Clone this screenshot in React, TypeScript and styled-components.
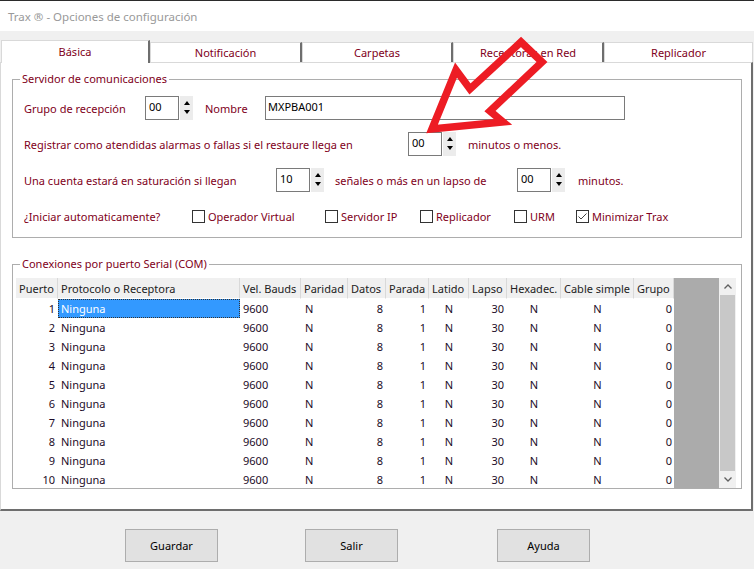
import styled, { createGlobalStyle } from 'styled-components'

const GlobalStyle = createGlobalStyle`
  html, body {
    margin: 0;
    padding: 0;
    background: #f0f0f0;
  }
  body {
    font-family: "Noto Sans", "Open Sans", sans-serif;
    font-size: 11px;
  }
  * {
    box-sizing: border-box;
  }
`

const MAROON = '#800020'

type Align = 'left' | 'right' | 'center'

const columns: { title: string; width: number; align: Align; pad: number }[] = [
  { title: 'Puerto', width: 42, align: 'right', pad: 3 },
  { title: 'Protocolo o Receptora', width: 182, align: 'left', pad: 3 },
  { title: 'Vel. Bauds', width: 61, align: 'left', pad: 3 },
  { title: 'Paridad', width: 47, align: 'left', pad: 4 },
  { title: 'Datos', width: 38, align: 'right', pad: 3 },
  { title: 'Parada', width: 43, align: 'right', pad: 3 },
  { title: 'Latido', width: 40, align: 'center', pad: 0 },
  { title: 'Lapso', width: 38, align: 'right', pad: 3 },
  { title: 'Hexadec.', width: 54, align: 'center', pad: 0 },
  { title: 'Cable simple', width: 73, align: 'center', pad: 0 },
  { title: 'Grupo', width: 40, align: 'right', pad: 2 },
]

const rows = Array.from({ length: 10 }, (_, i) => [
  String(i + 1),
  'Ninguna',
  '9600',
  'N',
  '8',
  '1',
  'N',
  '30',
  'N',
  'N',
  '0',
])

const tabs = [
  { label: 'Básica', width: 149 },
  { label: 'Notificación', width: 152 },
  { label: 'Carpetas', width: 151 },
  { label: 'Receptoras en Red', width: 151 },
  { label: 'Replicador', width: 149 },
]

const Spin = ({ value }: { value: string }) => (
  <SpinWrap>
    <SpinInput>{value}</SpinInput>
    <SpinButtons>
      <ArrowUp />
      <ArrowDown />
    </SpinButtons>
  </SpinWrap>
)

const Check = ({ label, width, checked }: { label: string; width: number; checked?: boolean }) => (
  <CheckItem $width={width}>
    <CheckBox>
      {checked && (
        <svg width="11" height="11" viewBox="0 0 11 11">
          <polyline points="1.5,5.5 4,8 9.5,2.5" fill="none" stroke="#444" strokeWidth="1" />
        </svg>
      )}
    </CheckBox>
    {label}
  </CheckItem>
)

const App = () => {
  return (
    <Window>
      <GlobalStyle />
      <TitleBar>Trax ® - Opciones de configuración</TitleBar>
      <TabStrip>
        {tabs.map((t, i) => (
          <Tab key={t.label} $width={t.width} $active={i === 0} $last={i === tabs.length - 1}>
            {t.label}
          </Tab>
        ))}
      </TabStrip>
      <Panel>
        <Group>
          <Legend $inset={-4}>Servidor de comunicaciones</Legend>
          <FormRow>
            <Label $width={121}>Grupo de recepción</Label>
            <Spin value="00" />
            <Label $width={60} $gap={12}>Nombre</Label>
            <TextInput>MXPBA001</TextInput>
          </FormRow>
          <FormRow>
            <Label $width={384}>Registrar como atendidas alarmas o fallas si el restaure llega en</Label>
            <Spin value="00" />
            <Label $gap={12}>minutos o menos.</Label>
          </FormRow>
          <FormRow>
            <Label $width={252}>Una cuenta estará en saturación si llegan</Label>
            <Spin value="10" />
            <Label $width={182} $gap={11}>señales o más en un lapso de</Label>
            <Spin value="00" />
            <Label $gap={13}>minutos.</Label>
          </FormRow>
          <FormRow>
            <Label $width={168}>¿Iniciar automaticamente?</Label>
            <Check label="Operador Virtual" width={133} />
            <Check label="Servidor IP" width={95} />
            <Check label="Replicador" width={94} />
            <Check label="URM" width={62} />
            <Check label="Minimizar Trax" width={120} checked />
          </FormRow>
        </Group>
        <TableGroup>
          <Legend $inset={4}>Conexiones por puerto Serial (COM)</Legend>
          <ListView>
            <Grid>
              <HeaderRow>
                {columns.map((c) => (
                  <HeaderCell key={c.title} $width={c.width}>
                    {c.title}
                  </HeaderCell>
                ))}
              </HeaderRow>
              {rows.map((r, ri) => (
                <DataRow key={ri}>
                  {r.map((v, ci) => (
                    <Cell
                      key={ci}
                      $width={columns[ci].width}
                      $align={columns[ci].align}
                      $pad={columns[ci].pad}
                      $selected={ri === 0 && ci === 1}
                    >
                      {v}
                    </Cell>
                  ))}
                </DataRow>
              ))}
            </Grid>
            <EmptyArea />
            <ScrollBar>
              <ScrollArrow>
                <svg width="8" height="5" viewBox="0 0 8 5">
                  <polyline points="0.5,4.5 4,1 7.5,4.5" fill="none" stroke="#606060" strokeWidth="1.3" />
                </svg>
              </ScrollArrow>
              <ScrollThumb />
              <ScrollArrow>
                <svg width="8" height="5" viewBox="0 0 8 5">
                  <polyline points="0.5,0.5 4,4 7.5,0.5" fill="none" stroke="#606060" strokeWidth="1.3" />
                </svg>
              </ScrollArrow>
            </ScrollBar>
          </ListView>
        </TableGroup>
      </Panel>
      <ButtonBar>
        <Button $offset={125}>Guardar</Button>
        <Button $offset={87}>Salir</Button>
        <Button $offset={99}>Ayuda</Button>
      </ButtonBar>
      <RedArrow width="140" height="115" viewBox="420 30 140 115">
        <polygon
          points="432,129 456,70 470,89 521,42 542,62 490,111 503,122"
          fill="none"
          stroke="#ed1c24"
          strokeWidth="7.5"
          strokeLinejoin="miter"
        />
      </RedArrow>
    </Window>
  )
}

export default App

const Window = styled.div`
  position: relative;
  display: flex;
  flex-direction: column;
  width: 754px;
  height: 569px;
  overflow: hidden;
  background: #f0f0f0;
`
const TitleBar = styled.div`
  display: flex;
  align-items: center;
  height: 31px;
  padding-left: 8px;
  background: #fff;
  border-top: 1px solid #2b2b2b;
  color: #999;
  font-size: 11.5px;
`
const TabStrip = styled.div`
  position: relative;
  z-index: 1;
  display: flex;
  align-items: flex-end;
  height: 31px;
  padding-left: 1px;
`
const Tab = styled.div<{ $width: number; $active?: boolean; $last?: boolean }>`
  display: flex;
  justify-content: center;
  align-items: center;
  width: ${(p) => p.$width}px;
  height: ${(p) => (p.$active ? 23 : 20)}px;
  margin-bottom: ${(p) => (p.$active ? -1 : 0)}px;
  padding-bottom: ${(p) => (p.$active ? 2 : 0)}px;
  background: #fff;
  border-top: 1px solid #d9d9d9;
  border-left: 1px solid #d9d9d9;
  border-right: ${(p) => (p.$last ? '1px solid #d9d9d9' : '2px solid #6e6e6e')};
  color: ${MAROON};
`
const Panel = styled.div`
  display: flex;
  flex-direction: column;
  gap: 18px;
  width: 753px;
  height: 449px;
  padding: 8px 9px 0 11px;
  background: #fff;
  border-top: 1px solid #d9d9d9;
  border-left: 1px solid #d9d9d9;
  border-right: 2px solid #6e6e6e;
  border-bottom: 2px solid #6e6e6e;
`
const Group = styled.fieldset`
  display: flex;
  flex-direction: column;
  gap: 12px;
  min-width: 0;
  margin: 0;
  padding: 9px 0 9px 11px;
  border: 1px solid #adadad;
`
const TableGroup = styled.fieldset`
  display: flex;
  flex-direction: column;
  min-width: 0;
  margin: 0;
  padding: 6px 0 0 3px;
  border: 1px solid #adadad;
`
const Legend = styled.legend<{ $inset: number }>`
  margin-left: ${(p) => p.$inset}px;
  padding: 0 2px;
  line-height: 16px;
  color: ${MAROON};
`
const FormRow = styled.div`
  display: flex;
  align-items: center;
  height: 24px;
`
const Label = styled.div<{ $width?: number; $gap?: number }>`
  flex: none;
  width: ${(p) => (p.$width ? `${p.$width}px` : 'auto')};
  margin-left: ${(p) => p.$gap ?? 0}px;
  color: ${MAROON};
  white-space: nowrap;
`
const SpinWrap = styled.div`
  flex: none;
  display: flex;
  height: 24px;
`
const SpinInput = styled.div`
  width: 34px;
  padding: 3px 3px 0;
  line-height: 14px;
  background: #fff;
  border: 1px solid #7a7a7a;
  color: #000;
`
const SpinButtons = styled.div`
  display: flex;
  flex-direction: column;
  justify-content: space-between;
  align-items: center;
  width: 13px;
  margin-left: 1px;
  padding: 5px 0 6px;
  background: #ececec;
`
const ArrowUp = styled.span`
  width: 0;
  height: 0;
  border-left: 3.5px solid transparent;
  border-right: 3.5px solid transparent;
  border-bottom: 4px solid #000;
`
const ArrowDown = styled.span`
  width: 0;
  height: 0;
  border-left: 3.5px solid transparent;
  border-right: 3.5px solid transparent;
  border-top: 4px solid #000;
`
const TextInput = styled.div`
  width: 360px;
  height: 24px;
  padding: 3px 2px 0;
  line-height: 14px;
  background: #fff;
  border: 1px solid #7a7a7a;
  color: #000;
`
const CheckItem = styled.div<{ $width: number }>`
  flex: none;
  display: flex;
  align-items: center;
  gap: 3px;
  width: ${(p) => p.$width}px;
  color: ${MAROON};
  white-space: nowrap;
`
const CheckBox = styled.span`
  display: flex;
  justify-content: center;
  align-items: center;
  width: 13px;
  height: 13px;
  background: #fff;
  border: 1px solid #333;
`
const ListView = styled.div`
  display: flex;
  width: 720px;
  height: 210px;
  overflow: hidden;
`
const Grid = styled.div`
  display: flex;
  flex-direction: column;
  width: 658px;
  background: #fff;
`
const HeaderRow = styled.div`
  display: flex;
  height: 21px;
  flex: none;
`
const HeaderCell = styled.div<{ $width: number }>`
  display: flex;
  align-items: center;
  width: ${(p) => p.$width}px;
  padding-left: 3px;
  background: #f0f0f0;
  border-right: 1px solid #d9d9d9;
  border-bottom: 1px solid #fff;
  color: #222;
  white-space: nowrap;
  overflow: hidden;
`
const DataRow = styled.div`
  display: flex;
  height: 19px;
  flex: none;
`
const Cell = styled.div<{ $width: number; $align: Align; $pad: number; $selected?: boolean }>`
  display: flex;
  align-items: center;
  justify-content: ${(p) => (p.$align === 'left' ? 'flex-start' : p.$align === 'right' ? 'flex-end' : 'center')};
  width: ${(p) => p.$width}px;
  padding: 0 ${(p) => p.$pad}px;
  background: ${(p) => (p.$selected ? '#3399ff' : 'transparent')};
  outline: ${(p) => (p.$selected ? '1px dotted #333' : 'none')};
  outline-offset: -1px;
  color: ${(p) => (p.$selected ? '#fff' : '#1c0c28')};
  white-space: nowrap;
`
const EmptyArea = styled.div`
  width: 45px;
  background: #ababab;
`
const ScrollBar = styled.div`
  display: flex;
  flex-direction: column;
  width: 17px;
  background: #f0f0f0;
`
const ScrollArrow = styled.div`
  display: flex;
  justify-content: center;
  align-items: center;
  height: 17px;
  flex: none;
`
const ScrollThumb = styled.div`
  flex: 1;
  margin: 0 1px;
  background: #c8c8c8;
`
const ButtonBar = styled.div`
  display: flex;
  padding-top: 18px;
`
const Button = styled.button<{ $offset: number }>`
  width: 93px;
  height: 33px;
  margin-left: ${(p) => p.$offset}px;
  background: #e1e1e1;
  border: 1px solid #adadad;
  border-radius: 0;
  color: #000;
  font-family: inherit;
  font-size: 11px;
`
const RedArrow = styled.svg`
  position: absolute;
  left: 420px;
  top: 30px;
  z-index: 2;
  pointer-events: none;
`
